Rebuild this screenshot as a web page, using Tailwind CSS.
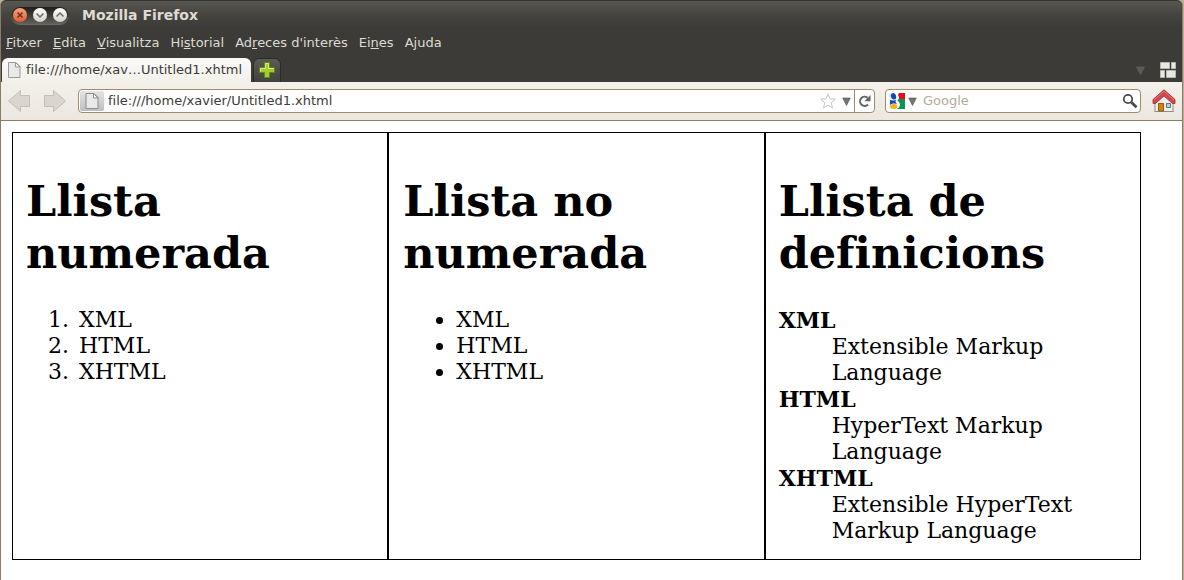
<!DOCTYPE html>
<html lang="ca">
<head>
<meta charset="utf-8">
<meta name="viewport" content="width=device-width, initial-scale=1">
<title>Mozilla Firefox</title>
<script src="https://cdn.jsdelivr.net/npm/@tailwindcss/browser@4"></script>
</head>
<body class="min-h-screen bg-[#b9ae97] font-['DejaVu_Sans',sans-serif] text-[13px] text-[#3c3b37] [font-variant-ligatures:discretionary-ligatures]">
<div class="flex min-h-screen flex-col rounded-t-md border-l border-[#8b7d65] bg-[#3c3b37] mr-px border-r">

  <header class="flex h-7 items-center rounded-t-md border-t border-[#33382e] bg-linear-to-b from-[#5a5853] via-[#45443f] to-[#3c3b37] pt-[2px] pl-[10px]">
    <div class="flex h-[18px] items-center gap-[6px] rounded-full border-b border-[#6a6963] bg-linear-to-b from-[#1f1e1b] to-[#62615b] px-[2px]">
      <button type="button" aria-label="Tanca" class="size-[14px] rounded-full bg-linear-to-b from-[#f9a283] to-[#ea5a22]">
        <svg viewBox="0 0 14 14" class="size-[14px]" fill="none" stroke="#5c3526" stroke-width="1.5"><path d="M4.500 4.500l5 5M9.500 4.500l-5 5"/></svg>
      </button>
      <button type="button" aria-label="Minimitza" class="size-[14px] rounded-full bg-linear-to-b from-white to-[#d5d1c7]">
        <svg viewBox="0 0 14 14" class="size-[14px]" fill="none" stroke="#6c6a62" stroke-width="1.5"><path d="M3.500 5.500L7 9l3.500-3.500"/></svg>
      </button>
      <button type="button" aria-label="Maximitza" class="size-[14px] rounded-full bg-linear-to-b from-white to-[#d5d1c7]">
        <svg viewBox="0 0 14 14" class="size-[14px]" fill="none" stroke="#6c6a62" stroke-width="1.5"><path d="M3.500 8.500L7 5l3.500 3.500"/></svg>
      </button>
    </div>
    <span class="ml-[13px] text-[14px] font-bold text-[#dfdbd2]">Mozilla Firefox</span>
  </header>

  <nav class="flex h-[30px] items-center gap-[11px] pl-[5px] text-[#dfdbd2]">
    <button type="button"><u>F</u>itxer</button>
    <button type="button"><u>E</u>dita</button>
    <button type="button"><u>V</u>isualitza</button>
    <button type="button">Hi<u>s</u>torial</button>
    <button type="button">Ad<u>r</u>eces d'interès</button>
    <button type="button">Ei<u>n</u>es</button>
    <button type="button">A<u>j</u>uda</button>
  </nav>

  <div class="flex h-6 items-stretch">
    <button type="button" class="ml-px flex w-[249px] items-center gap-1 rounded-t-md bg-linear-to-b from-[#fbfaf7] to-[#f3f0ea] pl-1 whitespace-nowrap">
      <svg viewBox="0 0 16 16" class="size-4 shrink-0"><path d="M2.500 .5h7.500l4 4v11h-11.500z" fill="#e9e9e9" stroke="#999"/><path d="M9.500 .5v4.500h4.500z" fill="#fff" stroke="#999"/></svg>
      <span>file:///home/xav…Untitled1.xhtml</span>
    </button>
    <button type="button" aria-label="Pestanya nova" class="ml-[2px] flex w-7 items-center justify-center rounded-t-md border border-b-0 border-[#2c2b28] bg-linear-to-b from-[#5b5a55] to-[#42413c] pb-px">
      <svg viewBox="0 0 16 16" class="size-4"><path d="M5.500 .5h5v5h5v5h-5v5h-5v-5h-5v-5h5z" fill="#a5ca2c" stroke="#5e8619"/><path d="M1.500 9.500v-3h5v-5h3v5h5" fill="none" stroke="#d8eb8c"/></svg>
    </button>
    <div class="ml-auto flex items-center gap-[15px] pr-[6px]">
      <button type="button" aria-label="Llista de pestanyes"><svg viewBox="0 0 9 9" class="size-[9px]"><path d="M.5 1h8l-4 7.500z" fill="#5c5b56" stroke="#686761" stroke-width=".6"/></svg></button>
      <button type="button" aria-label="Grups de pestanyes"><svg viewBox="0 0 16 16" class="size-4"><g fill="#e9e7e1" stroke="#b8b6b0"><path d="M.5.5h9v6h-9zM11.500.5h4v6h-4zM.5 8.500h4v7h-4zM6.500 8.500h9v7h-9z"/></g></svg></button>
    </div>
  </div>

  <div class="flex h-[39px] items-center border-b border-[#8b7d65] bg-linear-to-b from-[#f3f0ea] to-[#ece7e0] pr-[6px] pl-[6px]">
    <button type="button" aria-label="Enrere"><svg viewBox="0 0 24 24" class="size-6"><path d="M1.500 12L13.500 1.500v5h9v11h-9v5z" fill="#dad6cf" stroke="#c3bfb8"/></svg></button>
    <button type="button" aria-label="Endavant" class="ml-3"><svg viewBox="0 0 24 24" class="size-6"><path d="M22.500 12L10.500 1.500v5h-9v11h9v5z" fill="#dad6cf" stroke="#c3bfb8"/></svg></button>
    <div class="ml-[11px] flex h-6 min-w-0 flex-1 items-center rounded-[4px] border border-[#9d8b6b] bg-white pl-px">
      <span class="flex h-5 w-6 shrink-0 items-center justify-center rounded-[2px] bg-linear-to-b from-[#e5e5e5] to-[#bdbdbd]">
        <svg viewBox="0 0 16 16" class="size-4"><path d="M2 .5h8l4 4v11H2z" fill="#e9e9e9" stroke="#8c8c8c"/><path d="M9.500 .5v4.500h4.500z" fill="#fff" stroke="#8c8c8c"/></svg>
      </span>
      <input type="text" aria-label="Adreça" value="file:///home/xavier/Untitled1.xhtml" class="ml-1 min-w-0 flex-1 bg-transparent outline-none">
      <button type="button" aria-label="Afegeix als marcadors"><svg viewBox="0 0 16 16" class="size-4"><path d="M8 .8l2 5 5.300.3-4.100 3.500 1.300 5.300L8 12l-4.500 2.900 1.300-5.300L.7 6.100 6 5.800z" fill="#fff" stroke="#c6c6c6"/></svg></button>
      <button type="button" aria-label="Historial d'adreces" class="ml-[6px]"><svg viewBox="0 0 9 9" class="size-[9px]"><path d="M.7 1h7.600L4.500 8.500z" fill="#77756f" stroke="#55534e" stroke-width=".6"/></svg></button>
      <button type="button" aria-label="Actualitza" class="ml-[3px] flex h-[22px] w-5 items-center justify-center border-l border-[#9d8b6b]"><svg viewBox="0 0 14 14" class="size-[14px]"><path d="M9.500 3.700A4.600 4.600 0 1 0 10 10.500" fill="none" stroke="#66645e" stroke-width="2"/><path d="M12.500 1v6.300H6.300z" fill="#66645e"/></svg></button>
    </div>
    <div class="ml-[10px] flex h-6 w-64 items-center rounded-[4px] border border-[#9d8b6b] bg-white pr-[2px] pl-[3px]">
      <button type="button" aria-label="Motor de cerca" class="flex items-center gap-[3px]">
        <svg viewBox="0 0 16 16" class="size-4"><path d="M7 0h9v7H9z" fill="#e80c1a"/><path d="M8 6h8v10H8z" fill="#0c9353"/><path d="M0 0h7v7H0zM0 10h8v6H0z" fill="#e8effb"/><path d="M5 0h5c-1.500 2-.5 3 0 4 .6 2-1.500 3-1.500 3.500s2.500 2 2.500 4C11 14 9 16 6 16L1 11z" fill="#fff"/><ellipse cx="4.500" cy="3.300" rx="2.600" ry="3.300" transform="rotate(-18 4.500 3.300)" fill="#1849ad"/><path d="M1 7c3 1 5.500.2 6-.5l-.5 2.500L8 11c-2-.8-5-.7-7 1z" fill="#1849ad"/><ellipse cx="4.800" cy="13.400" rx="3.500" ry="2.300" fill="#f3b20c"/></svg>
        <svg viewBox="0 0 9 9" class="size-[9px]"><path d="M.7 1h7.600L4.500 8.500z" fill="#77756f" stroke="#55534e" stroke-width=".6"/></svg>
      </button>
      <input type="text" aria-label="Cerca" placeholder="Google" class="ml-[6px] min-w-0 flex-1 bg-transparent outline-none placeholder:text-[#b4ab9a]">
      <button type="button" aria-label="Cerca al web"><svg viewBox="0 0 16 16" class="size-4" fill="none" stroke="#4b4b4b"><circle cx="6" cy="6" r="4.200" stroke-width="1.800"/><path d="M9.300 9.300l5.200 5" stroke-width="2.800"/></svg></button>
    </div>
    <button type="button" aria-label="Inici" class="ml-[11px]"><svg viewBox="0 0 24 24" class="size-6"><path d="M2.500 22.500h19" stroke="#807e79"/><path d="M3 11l9-8 9 8v11.500H3z" fill="#eeeeec" stroke="#8f8d88"/><path d="M6.500 14.500h5v7.500h-5z" fill="#cf860e" stroke="#945b07"/><path d="M14.500 14.500h4v4h-4z" fill="#b5d0de" stroke="#62737b"/><path d="M12 .8L23 10.500v4h-2.500L12 7 3.500 14.500H1v-4z" fill="#d0474b" stroke="#a8262c" stroke-width=".8"/><path d="M2 11L12 2.200 22 11" fill="none" stroke="#e88180" stroke-width=".8"/></svg></button>
  </div>

  <main class="flex-1 bg-white pt-[11px] pr-[41px] pb-5 pl-[11px] font-['DejaVu_Serif',serif] text-[22px] leading-[26px] text-black">
    <div class="grid min-h-[428px] grid-cols-3">
      <section class="border border-black px-[13px] pt-[42px]">
        <h1 class="text-[43px] leading-[52px] font-bold">Llista numerada</h1>
        <ol class="mt-[28px] list-decimal pl-[50px]">
          <li class="pl-[3px]">XML</li>
          <li class="pl-[3px]">HTML</li>
          <li class="pl-[3px]">XHTML</li>
        </ol>
      </section>
      <section class="border border-black px-[14px] pt-[42px]">
        <h1 class="text-[43px] leading-[52px] font-bold">Llista no numerada</h1>
        <ul class="mt-[28px] list-disc pl-[53px]">
          <li>XML</li>
          <li>HTML</li>
          <li>XHTML</li>
        </ul>
      </section>
      <section class="border border-black px-[13px] pt-[42px]">
        <h1 class="text-[43px] leading-[52px] font-bold">Llista de definicions</h1>
        <dl class="mt-[28px]">
          <dt class="font-bold">XML</dt>
          <dd class="mt-px ml-[53px]">Extensible Markup Language</dd>
          <dt class="font-bold">HTML</dt>
          <dd class="mt-px ml-[53px]">HyperText Markup Language</dd>
          <dt class="font-bold">XHTML</dt>
          <dd class="mt-px ml-[53px]">Extensible HyperText Markup Language</dd>
        </dl>
      </section>
    </div>
  </main>
</div>
</body>
</html>
